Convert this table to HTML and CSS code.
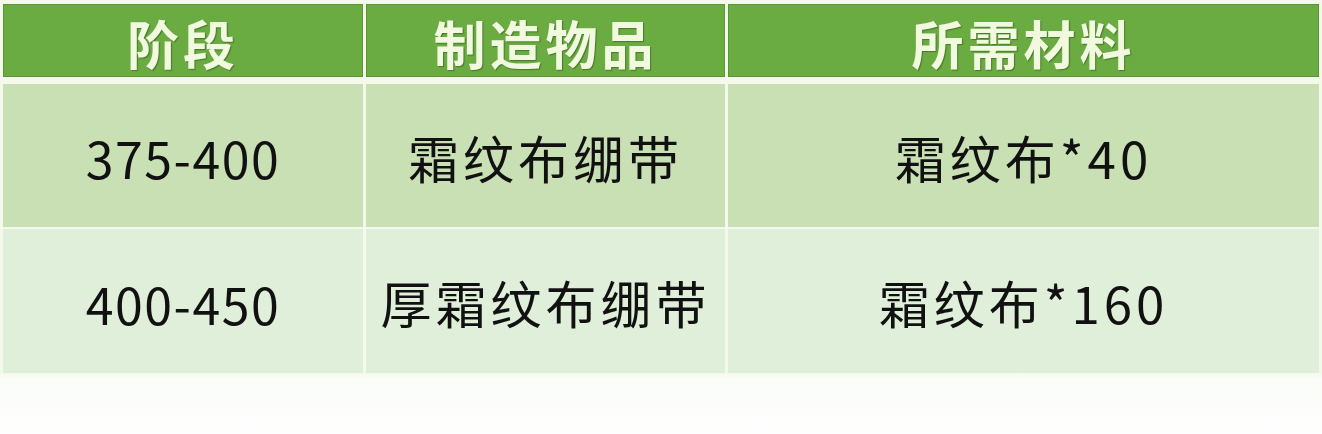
FILE: index.html
```html
<!DOCTYPE html>
<html lang="zh">
<head>
<meta charset="utf-8">
<link rel="stylesheet" href="styles.css">
</head>
<body>
<div class="sheet">
  <div class="table">
    <div class="row head-row">
      <div class="cell head">阶段</div>
      <div class="cell head">制造物品</div>
      <div class="cell head">所需材料</div>
    </div>
    <div class="row odd">
      <div class="cell num">375-400</div>
      <div class="cell">霜纹布绷带</div>
      <div class="cell">霜纹布*40</div>
    </div>
    <div class="row even">
      <div class="cell num">400-450</div>
      <div class="cell">厚霜纹布绷带</div>
      <div class="cell">霜纹布*160</div>
    </div>
  </div>
</div>
</body>
</html>
```
FILE: styles.css
```css
html, body {
  margin: 0;
  padding: 0;
  background: #fdfefc;
}
.sheet {
  width: 1322px;
  height: 434px;
  background: linear-gradient(#f5f9ec 0, #f5f9ec 373px, #fbfdf9 380px, #fefefe 434px);
  padding: 4px 4px 0 3px;
  box-sizing: border-box;
}
.table {
  display: flex;
  flex-direction: column;
  font-family: "Noto Sans CJK SC", "Noto Sans", sans-serif;
}
.row {
  display: grid;
  grid-template-columns: 360px 359px 591px;
  column-gap: 3px;
}
.head-row {
  height: 73px;
  margin-bottom: 7px;
}
.odd {
  height: 143px;
  margin-bottom: 2px;
}
.even {
  height: 144px;
}
.cell {
  display: flex;
  align-items: center;
  justify-content: center;
  font-size: 51px;
  line-height: 1;
  color: #111;
  letter-spacing: 4px;
  padding-top: 3px;
  box-sizing: border-box;
  min-height: 0;
}
.num {
  letter-spacing: 1.5px;
  font-size: 50px;
}
.odd .cell {
  background: #c8e0b3;
}
.even .cell {
  background: #e0efd9;
}
.head {
  background: #6aab42;
  color: #f1f9df;
  font-weight: bold;
  font-size: 52px;
  border: 1px solid #5b9539;
  text-shadow: 1px 1px 1px rgba(40, 70, 20, 0.5);
  letter-spacing: 4px;
  padding-top: 4px;
}
```
